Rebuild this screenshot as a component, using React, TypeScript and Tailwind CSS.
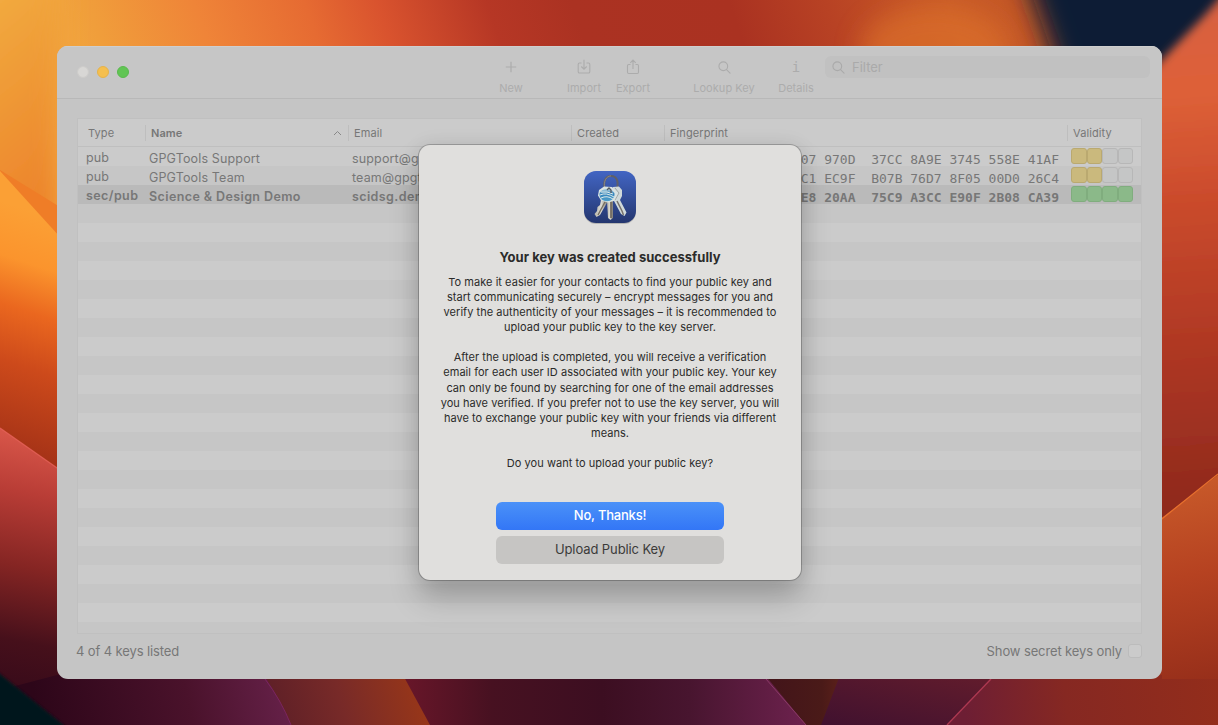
import React from "react";

type Row = { type: string; name: string; email: string; print: string; level: number; bold?: boolean };

const rows: Row[] = [
  { type: "pub", name: "GPGTools Support", email: "support@gpgtools.org", print: "07 970D  37CC 8A9E 3745 558E 41AF", level: 2 },
  { type: "pub", name: "GPGTools Team", email: "team@gpgtools.org", print: "C1 EC9F  B07B 76D7 8F05 00D0 26C4", level: 2 },
  { type: "sec/pub", name: "Science & Design Demo", email: "scidsg.demo", print: "E8 20AA  75C9 A3CC E90F 2B08 CA39", level: 4, bold: true },
];

/* Desktop picture behind the window: overlapping warm petals on navy. */
function Wallpaper() {
  return (
    <svg className="absolute inset-0" width="1218" height="725" viewBox="0 0 1218 725">
      <defs>
        <linearGradient id="top" gradientUnits="userSpaceOnUse" x1="0" y1="0" x2="1080" y2="-380">
          <stop offset="0" stopColor="#f3b045" />
          <stop offset=".07" stopColor="#f09e3b" />
          <stop offset=".16" stopColor="#ef8438" />
          <stop offset=".25" stopColor="#e66b32" />
          <stop offset=".31" stopColor="#d9532e" />
          <stop offset=".4" stopColor="#b63725" />
          <stop offset=".47" stopColor="#ab3222" />
          <stop offset=".6" stopColor="#aa3221" />
          <stop offset=".68" stopColor="#b84224" />
          <stop offset=".78" stopColor="#c85a27" />
          <stop offset="1" stopColor="#b64d26" />
        </linearGradient>
        <linearGradient id="left" x1="0" y1="0" x2=".3" y2="1">
          <stop offset="0" stopColor="#f7ba49" />
          <stop offset=".45" stopColor="#f0a13a" />
          <stop offset="1" stopColor="#ec812a" />
        </linearGradient>
        <linearGradient id="petal" gradientUnits="userSpaceOnUse" x1="60" y1="220" x2="-12" y2="440">
          <stop offset="0" stopColor="#fba035" />
          <stop offset=".22" stopColor="#fb942d" />
          <stop offset=".42" stopColor="#ea671f" />
          <stop offset=".65" stopColor="#cd4a1b" />
          <stop offset="1" stopColor="#a63317" />
        </linearGradient>
        <linearGradient id="leftlow" gradientUnits="userSpaceOnUse" x1="40" y1="435" x2="-15" y2="725">
          <stop offset="0" stopColor="#d9574a" />
          <stop offset=".2" stopColor="#b93d36" />
          <stop offset=".45" stopColor="#852523" />
          <stop offset=".7" stopColor="#46101b" />
          <stop offset="1" stopColor="#2d0619" />
        </linearGradient>
        <linearGradient id="right" gradientUnits="userSpaceOnUse" x1="1165" y1="20" x2="1200" y2="530">
          <stop offset="0" stopColor="#d8603f" />
          <stop offset=".14" stopColor="#de6138" />
          <stop offset=".35" stopColor="#cb4b2c" />
          <stop offset=".65" stopColor="#ae3723" />
          <stop offset="1" stopColor="#8a271c" />
        </linearGradient>
        <linearGradient id="rightlow" x1=".5" y1="0" x2=".55" y2="1">
          <stop offset="0" stopColor="#c95b2a" />
          <stop offset=".4" stopColor="#b64221" />
          <stop offset="1" stopColor="#8c2818" />
        </linearGradient>
        <linearGradient id="b1" gradientUnits="userSpaceOnUse" x1="40" y1="725" x2="285" y2="675"><stop offset="0" stopColor="#2d0619" /><stop offset=".6" stopColor="#4a122b" /><stop offset="1" stopColor="#662149" /></linearGradient>
        <linearGradient id="b2" gradientUnits="userSpaceOnUse" x1="275" y1="715" x2="420" y2="675"><stop offset="0" stopColor="#5f2027" /><stop offset=".45" stopColor="#782a28" /><stop offset="1" stopColor="#993718" /></linearGradient>
        <linearGradient id="b3" gradientUnits="userSpaceOnUse" x1="405" y1="0" x2="800" y2="0"><stop offset="0" stopColor="#681629" /><stop offset=".22" stopColor="#471121" /><stop offset=".5" stopColor="#3c0e21" /><stop offset=".72" stopColor="#48152f" /><stop offset="1" stopColor="#6b214c" /></linearGradient>
        <linearGradient id="b4" x1="0" y1="1" x2="1" y2="0"><stop offset="0" stopColor="#40112f" /><stop offset="1" stopColor="#651d2c" /></linearGradient>
        <linearGradient id="b5" gradientUnits="userSpaceOnUse" x1="965" y1="715" x2="1218" y2="690"><stop offset="0" stopColor="#6d1e34" /><stop offset=".4" stopColor="#862822" /><stop offset="1" stopColor="#932d1b" /></linearGradient>
        <linearGradient id="b6" x1="0" x2="1"><stop offset="0" stopColor="#42141a" /><stop offset=".6" stopColor="#4a1a18" /><stop offset="1" stopColor="#6e261c" /></linearGradient>
        <filter id="soft" x="-40%" y="-40%" width="180%" height="180%"><feGaussianBlur stdDeviation="13" /></filter>
        <filter id="mid" x="-40%" y="-20%" width="180%" height="140%"><feGaussianBlur stdDeviation="5" /></filter>
        <filter id="fine" x="-20%" y="-20%" width="140%" height="140%"><feGaussianBlur stdDeviation="1.5" /></filter>
      </defs>
      <rect width="1218" height="725" fill="url(#top)" />
      <ellipse cx="935" cy="50" rx="75" ry="45" fill="#dc702a" opacity=".7" filter="url(#soft)" />
      <path d="M1012 -60 L1300 -60 V150 H1085 Q1050 45 1012 -60Z" fill="#071a36" filter="url(#soft)" />
      <rect x="-60" y="-60" width="120" height="330" fill="url(#left)" filter="url(#soft)" />
      <path d="M0 170 L60 207 V260 H0Z" fill="#ef7d27" />
      <path d="M0 171 L60 237 V480 H0Z" fill="url(#petal)" />
      <path d="M0 428 L60 470 V725 H0Z" fill="url(#leftlow)" />
      <path d="M0 428 L60 470" stroke="#e7635b" strokeWidth="1.2" opacity=".8" />
      <path d="M1240 -25 L1204 16 L1150 72 V620 H1240Z" fill="url(#right)" filter="url(#mid)" />
      <path d="M1218 475 L1155 523 V725 H1218Z" fill="url(#rightlow)" />
      <path d="M1218 474 L1158 522" stroke="#e7702e" strokeWidth="1.2" />
      <path d="M57 675 H320 V725 H0 V690Z" fill="url(#b1)" />
      <path d="M-10 666 L66 727 H-10Z" fill="#04131f" filter="url(#fine)" />
      <path d="M264 675 H450 V725 H291Q280 700 264 675Z" fill="url(#b2)" />
      <path d="M265 679Q281 700 291 725" fill="none" stroke="#7b2560" strokeWidth="1" />
      <path d="M403 675 H850 V725 H430Z" fill="url(#b3)" />
      <path d="M765 675 H860 V725 H806Z" fill="url(#b6)" />
      <path d="M766 679 L806 725" stroke="#8a3a66" strokeWidth="1" />
      <path d="M840 675 H1010 V725 H821Z" fill="url(#b4)" />
      <path d="M994 675 H1162 V679 H1218 V725 H947Z" fill="url(#b5)" />
      <path d="M991 679 L947 725" stroke="#ad3851" strokeWidth="1.3" />
    </svg>
  );
}

function Tool({ label, box, children }: { label: string; box: string; children: React.ReactNode }) {
  return (
    <div className={`flex shrink-0 flex-col items-center ${box}`}>
      <div className="flex h-[18px] items-center justify-center">{children}</div>
      <span className="mt-[5px] whitespace-nowrap text-[11px] leading-[14px] tracking-[0.05px]">{label}</span>
    </div>
  );
}

function KeysIcon() {
  return (
    <svg width="56" height="56" viewBox="0 0 56 56" className="shrink-0">
      <defs>
        <linearGradient id="app" x1="0" y1="0" x2="0" y2="1"><stop offset="0" stopColor="#4265c3" /><stop offset="1" stopColor="#24366f" /></linearGradient>
        <linearGradient id="metal" x1="0" x2="1"><stop offset="0" stopColor="#b9b6aa" /><stop offset=".5" stopColor="#dddcd4" /><stop offset="1" stopColor="#77746f" /></linearGradient>
        <linearGradient id="disc" x1="0" y1="0" x2="0" y2="1"><stop offset="0" stopColor="#b5d5e2" /><stop offset=".4" stopColor="#3584bb" /><stop offset="1" stopColor="#4fa0cb" /></linearGradient>
      </defs>
      <rect x="2" y="2.5" width="52" height="52.5" rx="12" fill="#777" opacity=".4" />
      <rect x="2" y="2" width="52" height="52" rx="12" fill="url(#app)" />
      <path d="M23.500 23C20.500 13 23 7 29 7S37.500 13 34 22" fill="none" stroke="#5f6068" strokeWidth="2" />
      <path d="M22.700 19C21.500 12 24 7.500 29 6.800" fill="none" stroke="#969490" strokeWidth=".7" />
      <path d="M31 18L37 17.500L40 21V27L38 31L44.500 43.500L42.500 47L39 45L32 32L29 24Z" fill="#d0d9da" />
      <path d="M35 32L40 42L41.500 46" fill="none" stroke="#77716b" strokeWidth="1.500" />
      <path d="M33 19L37 24L33 31" fill="none" stroke="#8c9494" strokeWidth=".7" />
      <path d="M19 31L26 32L18 46L14.500 48L12.500 45L15 42L15.500 38L18 36Z" fill="url(#metal)" />
      <path d="M23.500 32L16 46" fill="none" stroke="#776f60" strokeWidth="1.400" />
      <path d="M25 31H31V49L28.500 51L26 49Z" fill="url(#metal)" />
      <path d="M29 32V49" stroke="#696157" strokeWidth="1.600" />
      <path d="M17 21L22 17.500L30 18L36 24L32 32L26 33.500L19 31.500L16 26.500Z" fill="#d9e3e3" />
      <ellipse cx="25" cy="26" rx="7.500" ry="6.200" fill="url(#disc)" />
      <path d="M18 26Q24 23 32 28M19 29Q25 26 31 30M19 23Q25 22 31 25" fill="none" stroke="#dcebea" strokeWidth="1" />
      <path d="M25 21L27 19L29 21V24" fill="none" stroke="#555a60" strokeWidth="1.300" />
    </svg>
  );
}

function Magnifier({ size }: { size: number }) {
  return (
    <svg width={size} height={size} viewBox="0 0 14 14" fill="none" stroke="currentColor" strokeWidth="1.2" strokeLinecap="round">
      <circle cx="5.700" cy="5.700" r="4.700" /><path d="M9.200 9.200L13 13" />
    </svg>
  );
}

const body = [
  "To make it easier for your contacts to find your public key and",
  "start communicating securely – encrypt messages for you and",
  "verify the authenticity of your messages – it is recommended to",
  "upload your public key to the key server.",
  "",
  "After the upload is completed, you will receive a verification",
  "email for each user ID associated with your public key. Your key",
  "can only be found by searching for one of the email addresses",
  "you have verified. If you prefer not to use the key server, you will",
  "have to exchange your public key with your friends via different",
  "means.",
  "",
  "Do you want to upload your public key?",
];

export default function App() {
  return (
    <div className="relative h-[725px] w-[1218px] overflow-hidden px-[57px] pt-[46px] font-['Inter',sans-serif]">
      <Wallpaper />
      <main className="relative flex h-[633px] w-[1105px] flex-col overflow-hidden rounded-[11px] bg-[#c5c5c5] text-[#777]">
        <header className="flex h-[53px] shrink-0 border-b border-t border-b-[#b8b8b8] border-t-[#cecece] bg-[#c6c6c6] text-[#acacac]">
          <div className="ml-5 mt-[19px] flex h-3 w-[53px] gap-2">
            <i className="size-3 rounded-full border border-[#cdccca] bg-[#d8d7d5]" />
            <i className="size-3 rounded-full border border-[#e6b34a] bg-[#f5bf4f]" />
            <i className="size-3 rounded-full border border-[#59b94d] bg-[#61c554]" />
          </div>
          <div className="ml-[357px] mt-[11px] flex h-10">
            <Tool label="New" box="w-[48px]">
              <svg width="12" height="12" viewBox="0 0 12 12" fill="none" stroke="currentColor" strokeWidth="1.200"><path d="M6 .8V11.2M.8 6H11.2" /></svg>
            </Tool>
            <Tool label="Import" box="ml-[24px] w-[50px]">
              <svg width="14" height="16" viewBox="0 0 14 16" fill="none" stroke="currentColor" strokeWidth="1.100"><path d="M4.500 4H2.500Q1.200 4 1.200 5.300V12.700Q1.200 14 2.500 14H11.500Q12.800 14 12.800 12.700V5.300Q12.800 4 11.500 4H9.500M7 .8V10M4.300 7.500L7 10.200L9.700 7.500" /></svg>
            </Tool>
            <Tool label="Export" box="w-[48px]">
              <svg width="14" height="16" viewBox="0 0 14 16" fill="none" stroke="currentColor" strokeWidth="1.100"><path d="M4.500 5.500H2.700Q1.500 5.500 1.500 6.700V13.300Q1.500 14.500 2.700 14.500H11.300Q12.500 14.500 12.500 13.300V6.700Q12.500 5.500 11.300 5.500H9.500M7 10V1.200M4.300 3.800L7 1.100L9.700 3.800" /></svg>
            </Tool>
            <Tool label="Lookup Key" box="ml-[32px] w-[70px]"><Magnifier size={13} /></Tool>
            <Tool label="Details" box="ml-[14px] w-[46px]"><b className="font-['DejaVu_Sans_Mono',monospace] text-[14px] font-normal leading-4">i</b></Tool>
          </div>
          <div className="ml-[6px] mt-[9px] flex h-[22px] w-[325px] items-center gap-[7px] rounded-[6px] bg-[#c1c1c1] pl-[7px] pt-px text-[13px] text-[#aaa]"><Magnifier size={13} /><span>Filter</span></div>
        </header>
        <section className="ml-5 mt-[19px] flex h-[516px] w-[1065px] shrink-0 flex-col border border-[#c0c0c0] bg-[#cbcbcb]">
          <div className="flex h-[28px] shrink-0 items-center border-b border-[#bfbfbf] pt-px text-[11px] tracking-[0.1px]">
            <span className="w-[67px] pl-[10px]">Type</span>
            <span className="flex h-4 w-[203px] items-center justify-between border-l border-[#bebebe] pl-[5px] pr-[6px] font-semibold">Name<svg width="9" height="6" viewBox="0 0 9 6" fill="none" stroke="#888"><path d="M1 5L4.500 1.500L8 5" /></svg></span>
            <span className="flex h-4 w-[223px] items-center border-l border-[#bebebe] pl-[5px]">Email</span>
            <span className="flex h-4 w-[93px] items-center border-l border-[#bebebe] pl-[5px]">Created</span>
            <span className="flex h-4 w-[403px] items-center border-l border-[#bebebe] pl-[5px]">Fingerprint</span>
            <span className="flex h-4 items-center border-l border-[#bebebe] pl-[5px]">Validity</span>
          </div>
          {rows.map((r, i) => (
            <div key={r.name} className={`flex h-[19px] shrink-0 items-center text-[12.5px] ${r.bold ? "bg-[#bababa] font-semibold tracking-[0.4px]" : i ? "bg-[#c6c6c6] tracking-[0.15px]" : "tracking-[0.15px]"}`}>
              <span className="w-[71px] pl-[8px] pt-[4px]">{r.type}</span>
              <span className="w-[203px] pt-[5px]">{r.name}</span>
              <span className="w-[223px] pt-[5px]">{r.email}</span>
              <span className="w-[484px] whitespace-pre pt-[7px] text-right font-['DejaVu_Sans_Mono',monospace] text-[13px] tracking-[0px]">{r.print}</span>
              <span className="mb-[2px] ml-[12px] flex">
                {[0, 1, 2, 3].map((n) => (
                  <i key={n} className={`h-4 w-[15.500px] rounded-[3px] border ${n >= r.level ? "border-[#b7b7b7] bg-[#c5c6c6]" : r.bold ? "border-[#80ad7e] bg-[#8bb989]" : "border-[#baa970] bg-[#cab97d]"}`} />
                ))}
              </span>
            </div>
          ))}
          <div className="grow bg-[repeating-linear-gradient(to_bottom,#c6c6c6_0px,#c6c6c6_19px,#cbcbcb_19px,#cbcbcb_38px)]" />
        </section>
        <footer className="flex h-[35px] items-center justify-between pl-[19px] pr-[20px] text-[13px] tracking-[-0.12px]">
          <span>4 of 4 keys listed</span>
          <span className="flex items-center gap-[6px]">Show secret keys only<i className="mb-[2px] size-[14px] rounded-[3px] border border-[#bcbcbc] bg-[#cbcbcb]" /></span>
        </footer>
      </main>
      <div role="dialog" className="absolute left-[419px] top-[145px] flex h-[435px] w-[382px] flex-col items-center rounded-[11px] bg-[#e0dfdd] pt-[24px] text-[#2b2b2a] shadow-[0_0_0_1px_rgba(0,0,0,.22),0_18px_30px_rgba(0,0,0,.22),0_0_20px_rgba(0,0,0,.08)]">
        <KeysIcon />
        <h1 className="mt-[23px] text-[13px] font-bold leading-[18px] tracking-[0.03px]">Your key was created successfully</h1>
        <div className="mt-[9px] text-center text-[11px] leading-[15.080px] tracking-[0.04px]">
          {body.map((line, i) => <p key={i} className="h-[15.080px] whitespace-nowrap">{line}</p>)}
        </div>
        <button className="mt-[31px] h-7 w-[228px] rounded-[6px] bg-gradient-to-b from-[#4b91f8] to-[#3376f6] text-[13px] font-medium tracking-[-0.2px] text-white">No, Thanks!</button>
        <button className="mt-[6px] h-7 w-[228px] rounded-[6px] bg-[#c6c5c3] text-[13px] tracking-[-0.1px] text-[#3b3b3a]">Upload Public Key</button>
      </div>
    </div>
  );
}
